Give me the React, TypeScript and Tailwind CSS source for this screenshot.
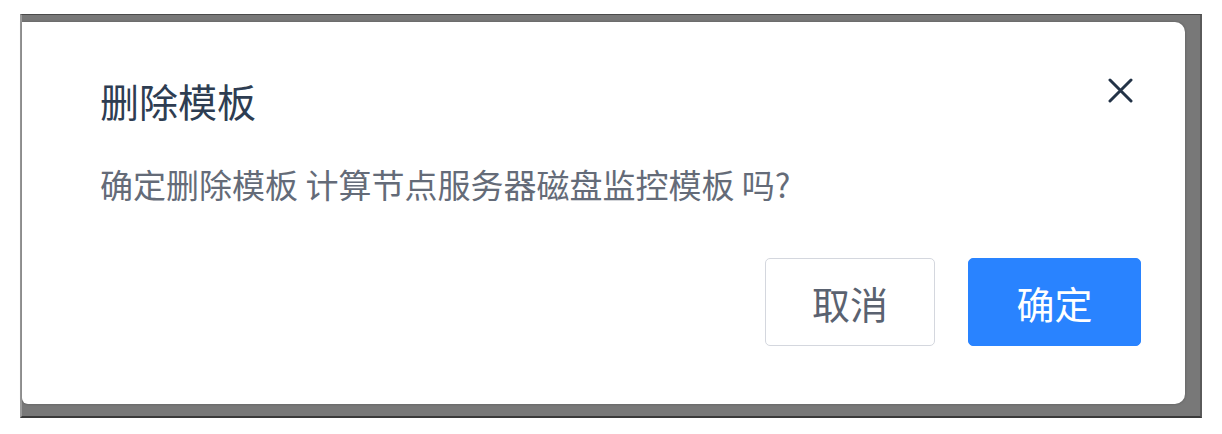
const font = { fontFamily: '"Noto Sans CJK SC", "Noto Sans", sans-serif' };

const CloseIcon = () => (
  <svg width="25" height="25" viewBox="0 0 25 25" fill="none">
    <path d="M2 2L23 23M23 2L2 23" stroke="#233347" strokeWidth="3" strokeLinecap="round" />
  </svg>
);

export default function App() {
  return (
    <div className="min-h-screen bg-white pt-[14px] pl-[20px]" style={font}>
      <div className="flex h-[404px] w-[1182px] flex-col border-t border-r-2 border-b-2 border-l-2 border-t-[#4a4a4a] border-r-[#5a5a5a] border-b-[#3a3a3a] border-l-[#9a9a9a] bg-[#787878]">
        <div className="mt-[7px] mr-[15px] mb-[12px] flex flex-1 flex-col rounded-r-[10px] rounded-bl-[6px] bg-white pt-[56px] pr-[44px] pl-[78px] shadow-[0_0_3px_rgba(0,0,0,0.25)]">
          <div className="flex items-start justify-between pr-[8px]">
            <h2 className="mt-[2px] h-[40px] text-[39px] leading-[40px] text-[#2e3d52]">删除模板</h2>
            <button type="button" aria-label="关闭" className="h-[25px] w-[25px]">
              <CloseIcon />
            </button>
          </div>
          <p className="mt-[44px] h-[40px] text-[33px] leading-[40px] text-[#646b78]">
            确定删除模板 计算节点服务器磁盘监控模板 吗?
          </p>
          <div className="mt-[54px] flex justify-end gap-[33px]">
            <button
              type="button"
              className="h-[88px] w-[170px] rounded-[5px] border border-[#d4d7de] bg-white text-[38px] text-[#5a6270]"
            >
              取消
            </button>
            <button
              type="button"
              className="h-[88px] w-[173px] rounded-[5px] border border-[#2983ff] bg-[#2983ff] text-[38px] text-white"
            >
              确定
            </button>
          </div>
        </div>
      </div>
    </div>
  );
}
